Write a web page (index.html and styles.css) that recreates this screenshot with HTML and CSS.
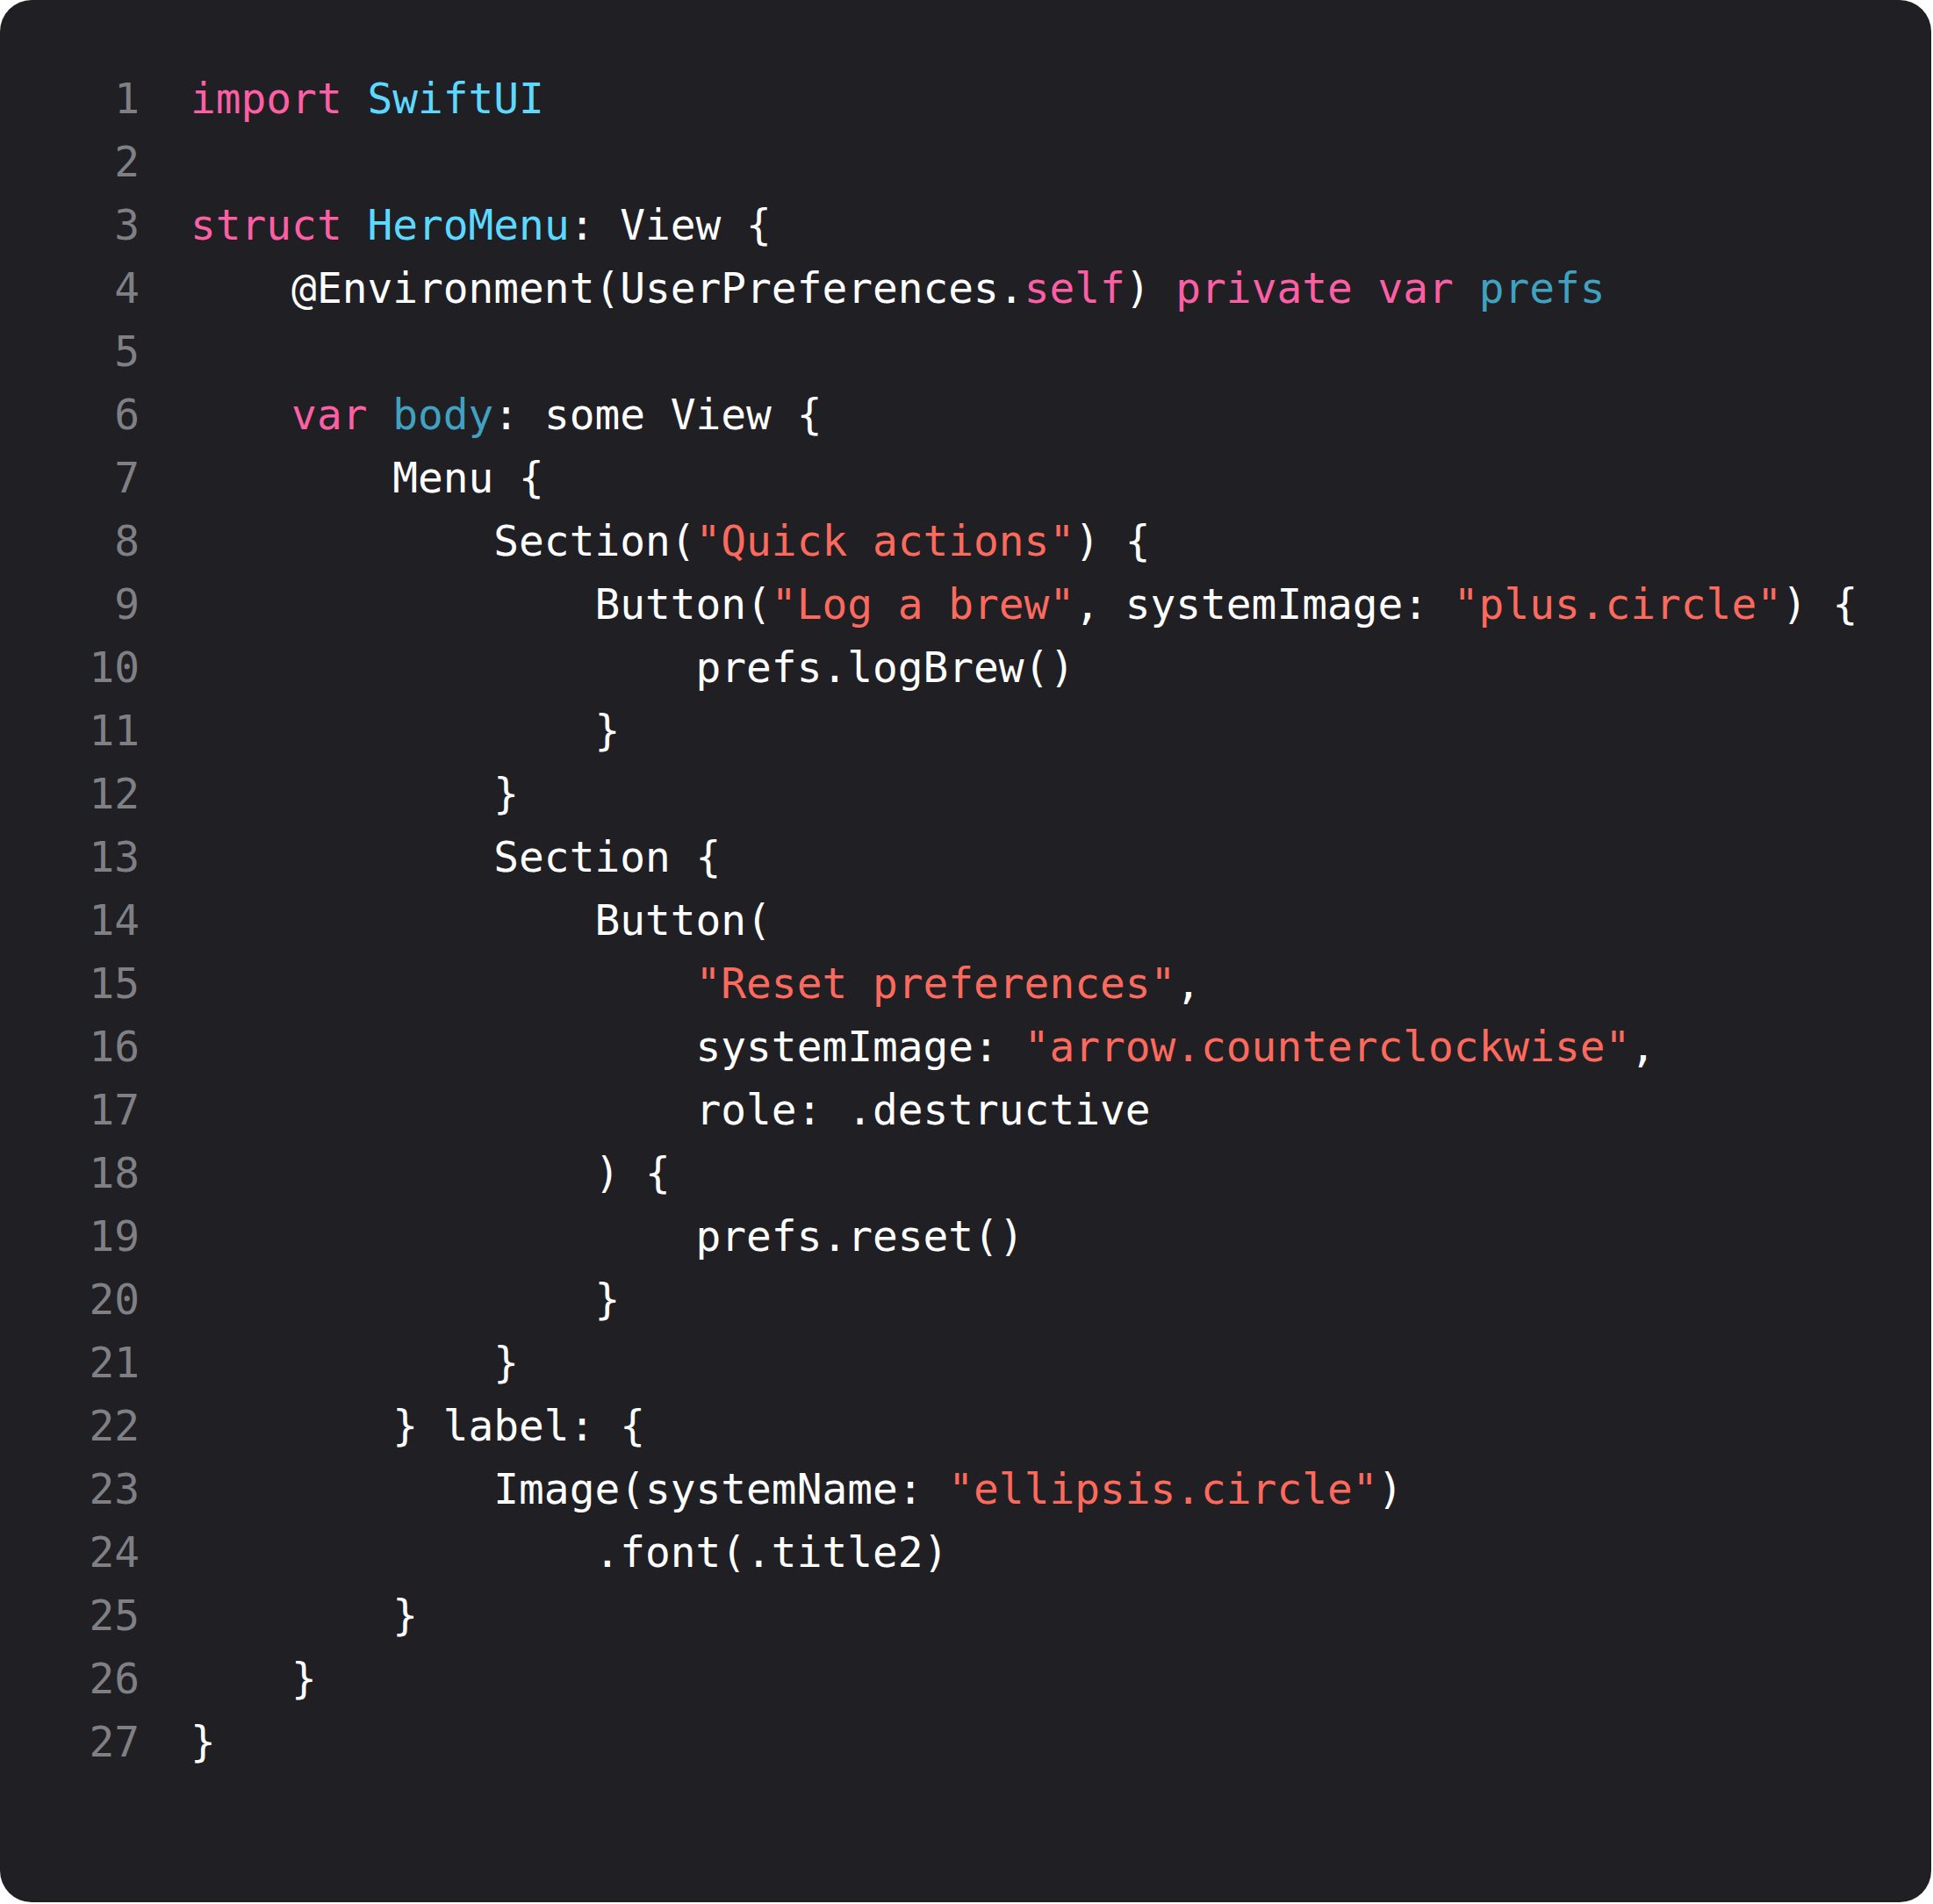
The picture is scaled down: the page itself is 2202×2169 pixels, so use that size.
FILE: index.html
```html
<!DOCTYPE html>
<html>
<head>
<meta charset="utf-8">
<link rel="stylesheet" href="styles.css">
</head>
<body>
<div class="card">
  <div class="code">
    <div class="ln">1</div><div class="src"><span class="kw">import</span> <span class="ty">SwiftUI</span></div>
    <div class="ln">2</div><div class="src"></div>
    <div class="ln">3</div><div class="src"><span class="kw">struct</span> <span class="ty">HeroMenu</span>: View {</div>
    <div class="ln">4</div><div class="src">    @Environment(UserPreferences.<span class="kw">self</span>) <span class="kw">private</span> <span class="kw">var</span> <span class="id">prefs</span></div>
    <div class="ln">5</div><div class="src"></div>
    <div class="ln">6</div><div class="src">    <span class="kw">var</span> <span class="id">body</span>: some View {</div>
    <div class="ln">7</div><div class="src">        Menu {</div>
    <div class="ln">8</div><div class="src">            Section(<span class="str">"Quick actions"</span>) {</div>
    <div class="ln">9</div><div class="src">                Button(<span class="str">"Log a brew"</span>, systemImage: <span class="str">"plus.circle"</span>) {</div>
    <div class="ln">10</div><div class="src">                    prefs.logBrew()</div>
    <div class="ln">11</div><div class="src">                }</div>
    <div class="ln">12</div><div class="src">            }</div>
    <div class="ln">13</div><div class="src">            Section {</div>
    <div class="ln">14</div><div class="src">                Button(</div>
    <div class="ln">15</div><div class="src">                    <span class="str">"Reset preferences"</span>,</div>
    <div class="ln">16</div><div class="src">                    systemImage: <span class="str">"arrow.counterclockwise"</span>,</div>
    <div class="ln">17</div><div class="src">                    role: .destructive</div>
    <div class="ln">18</div><div class="src">                ) {</div>
    <div class="ln">19</div><div class="src">                    prefs.reset()</div>
    <div class="ln">20</div><div class="src">                }</div>
    <div class="ln">21</div><div class="src">            }</div>
    <div class="ln">22</div><div class="src">        } label: {</div>
    <div class="ln">23</div><div class="src">            Image(systemName: <span class="str">"ellipsis.circle"</span>)</div>
    <div class="ln">24</div><div class="src">                .font(.title2)</div>
    <div class="ln">25</div><div class="src">        }</div>
    <div class="ln">26</div><div class="src">    }</div>
    <div class="ln">27</div><div class="src">}</div>
  </div>
</div>
</body>
</html>
```
FILE: styles.css
```css
html, body {
  margin: 0;
  padding: 0;
  background: #ffffff;
}
.card {
  width: 2200px;
  height: 2167px;
  box-sizing: border-box;
  background: #1f1f24;
  border-radius: 36px;
  padding: 77px 0 0 101px;
}
.code {
  display: grid;
  grid-template-columns: 58px 1fr;
  column-gap: 58px;
  font-family: "DejaVu Sans Mono", "Liberation Mono", monospace;
  font-size: 47.8px;
  line-height: 72px;
  color: #ffffff;
}
.ln {
  text-align: right;
  color: #808084;
}
.src {
  white-space: pre;
  min-height: 72px;
}
.kw { color: #fc5fa3; }
.ty { color: #5dd8ff; }
.id { color: #41a1c0; }
.str { color: #fc6a5d; }
```
